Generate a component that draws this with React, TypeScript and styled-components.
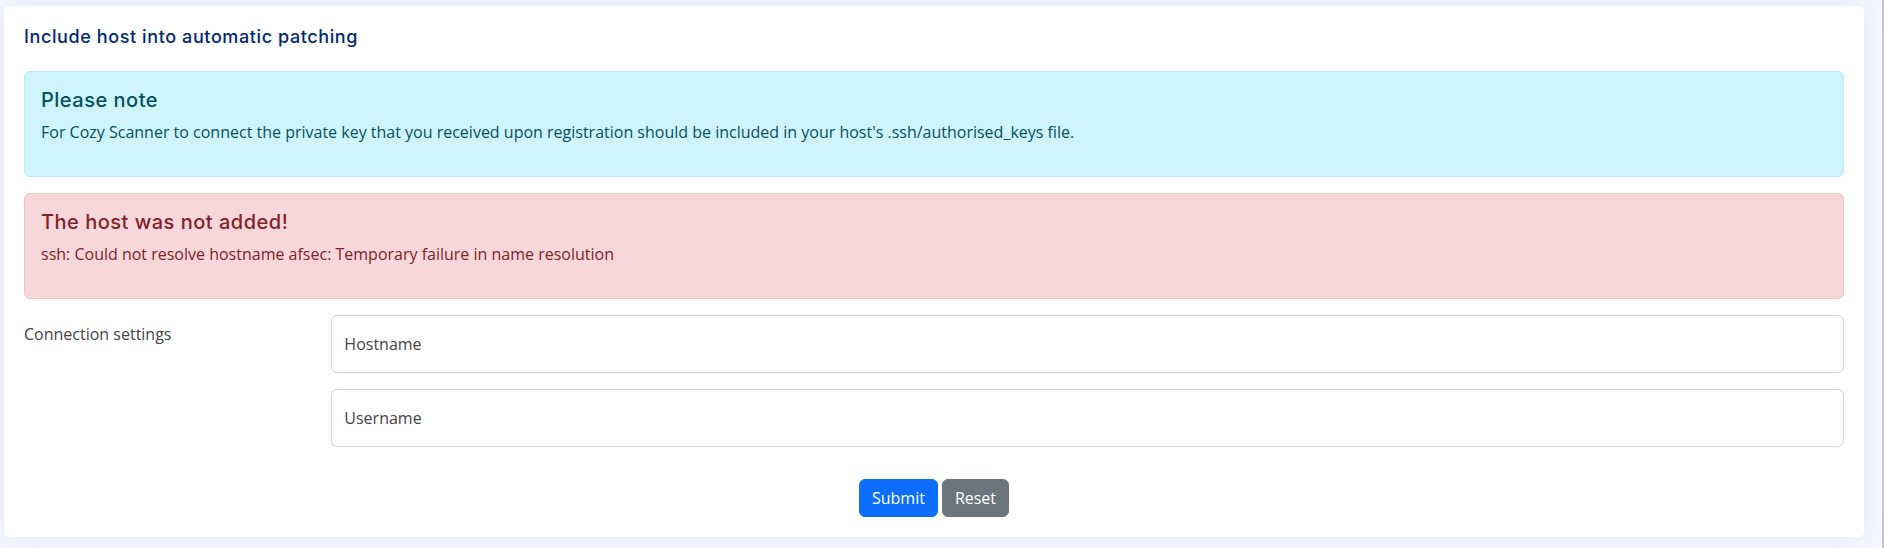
import React from "react";
import styled, { createGlobalStyle } from "styled-components";

const GlobalStyle = createGlobalStyle`
  * {
    box-sizing: border-box;
  }
  body {
    margin: 0;
    background: #f6f9ff;
    font-family: "Open Sans", "Liberation Sans", sans-serif;
    color: #444444;
    font-size: 16px;
  }
`;

const headingFont = `"Inter", "Noto Sans", "Liberation Sans", sans-serif`;

const Page = styled.div`
  display: flex;
  height: 548px;
  overflow: hidden;
`;

const Main = styled.main`
  flex: 1;
  padding: 6px 18px 11px 4px;
`;

const ScrollEdge = styled.div`
  width: 2px;
  background: #c6c8cc;
`;

const Card = styled.section`
  background: #ffffff;
  border-radius: 5px;
  box-shadow: 0 0 30px rgba(1, 41, 112, 0.1);
  padding: 0 20px 20px 20px;
`;

const CardTitle = styled.h5`
  margin: 0 0 8px 0;
  padding: 20px 0 15px 0;
  font-family: ${headingFont};
  font-size: 18px;
  font-weight: 500;
  letter-spacing: 0.6px;
  line-height: 1.2;
  color: #012970;
`;

type Tone = "info" | "danger";

const tones: Record<Tone, { bg: string; border: string; text: string }> = {
  info: { bg: "#cff4fc", border: "#b6effb", text: "#055160" },
  danger: { bg: "#f8d7da", border: "#f5c2c7", text: "#842029" },
};

const Alert = styled.div<{ $tone: Tone }>`
  background: ${(p) => tones[p.$tone].bg};
  border: 1px solid ${(p) => tones[p.$tone].border};
  color: ${(p) => tones[p.$tone].text};
  border-radius: 6px;
  padding: 16px;
  margin-bottom: 16px;
`;

const AlertHeading = styled.h4`
  margin: 0 0 8px 0;
  font-family: ${headingFont};
  font-size: 20px;
  font-weight: 500;
  letter-spacing: 0.5px;
  line-height: 24px;
`;

const AlertText = styled.p`
  margin: 0 0 16px 0;
  font-size: 16px;
  line-height: 24px;
`;

const FormRow = styled.div`
  display: grid;
  grid-template-columns: 2fr 10fr;
  margin: 0 -12px;
`;

const FieldLabel = styled.label`
  padding: 7px 12px 0 12px;
  font-size: 16px;
  line-height: 24px;
  color: #444444;
`;

const Fields = styled.div`
  padding: 0 12px;
`;

const Floating = styled.div`
  position: relative;
  margin-bottom: 16px;
`;

const Input = styled.input`
  display: block;
  width: 100%;
  height: 58px;
  padding: 16px 12px;
  border: 1px solid #ced4da;
  border-radius: 6px;
  background: #ffffff;
  font-family: "Open Sans", "Liberation Sans", sans-serif;
  font-size: 16px;
  color: #212529;
  outline: none;
`;

const FloatLabel = styled.label`
  position: absolute;
  top: 0;
  left: 0;
  height: 100%;
  display: flex;
  align-items: center;
  padding: 0 13px;
  font-size: 16px;
  color: #444444;
  pointer-events: none;
`;

const Actions = styled.div`
  display: flex;
  justify-content: center;
  gap: 4px;
  padding-top: 16px;
`;

const Button = styled.button<{ $variant: "primary" | "secondary" }>`
  font-family: "Open Sans", "Liberation Sans", sans-serif;
  font-size: 16px;
  line-height: 24px;
  padding: 6px 12px;
  border-radius: 6px;
  border: 1px solid
    ${(p) => (p.$variant === "primary" ? "#0d6efd" : "#6c757d")};
  background: ${(p) => (p.$variant === "primary" ? "#0d6efd" : "#6c757d")};
  color: #ffffff;
  cursor: pointer;
`;

const FloatingField = ({ id, label }: { id: string; label: string }) => (
  <Floating>
    <Input id={id} type="text" />
    <FloatLabel htmlFor={id}>{label}</FloatLabel>
  </Floating>
);

export default function App() {
  return (
    <Page>
      <GlobalStyle />
      <Main>
        <Card>
          <CardTitle>Include host into automatic patching</CardTitle>
          <Alert $tone="info">
            <AlertHeading>Please note</AlertHeading>
            <AlertText>
              For Cozy Scanner to connect the private key that you received
              upon registration should be included in your host's
              .ssh/authorised_keys file.
            </AlertText>
          </Alert>
          <Alert $tone="danger">
            <AlertHeading>The host was not added!</AlertHeading>
            <AlertText>
              ssh: Could not resolve hostname afsec: Temporary failure in name
              resolution
            </AlertText>
          </Alert>
          <form onSubmit={(e) => e.preventDefault()}>
            <FormRow>
              <FieldLabel>Connection settings</FieldLabel>
              <Fields>
                <FloatingField id="hostname" label="Hostname" />
                <FloatingField id="username" label="Username" />
              </Fields>
            </FormRow>
            <Actions>
              <Button type="submit" $variant="primary">
                Submit
              </Button>
              <Button type="reset" $variant="secondary">
                Reset
              </Button>
            </Actions>
          </form>
        </Card>
      </Main>
      <ScrollEdge />
    </Page>
  );
}
